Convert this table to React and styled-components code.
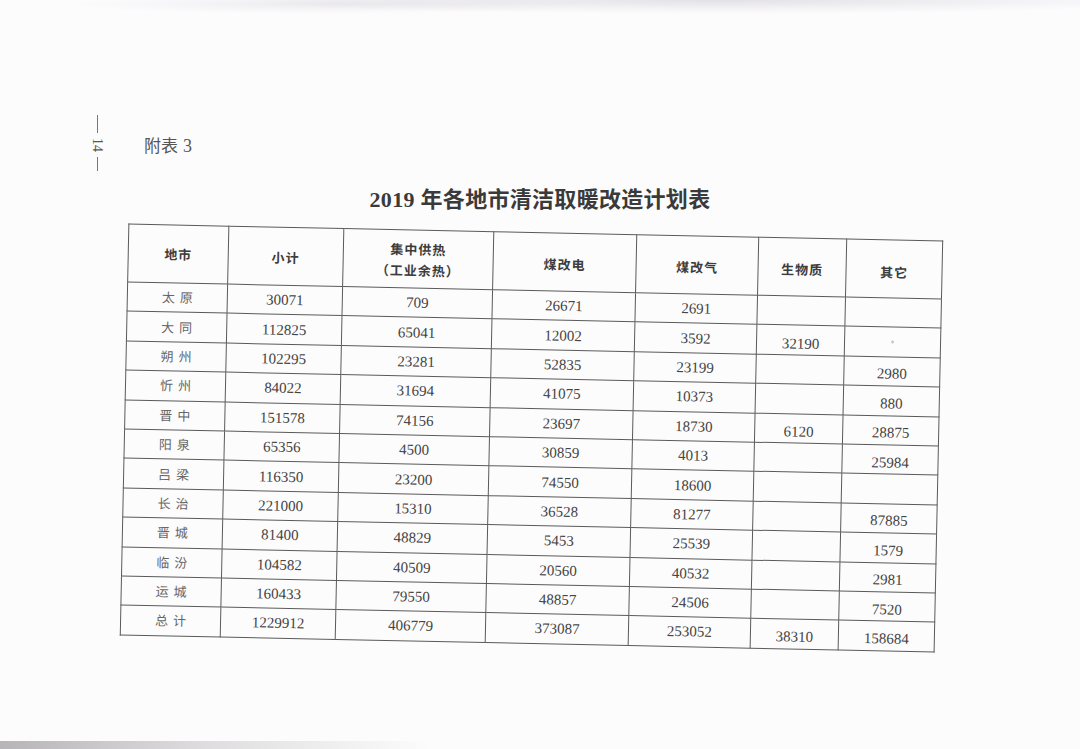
import React from 'react';
import styled, { createGlobalStyle } from 'styled-components';

const GlobalStyle = createGlobalStyle`
  html, body {
    margin: 0;
    padding: 0;
    background: #fdfcfd;
  }
`;

const Sheet = styled.div`
  width: 1080px;
  height: 749px;
  overflow: hidden;
  box-sizing: border-box;
  padding-top: 108px;
  display: flex;
  flex-direction: column;
  background:
    radial-gradient(ellipse 480px 14px at 720px 0px, rgba(205,203,210,0.55), rgba(253,252,253,0)),
    radial-gradient(ellipse 260px 10px at 330px 4px, rgba(215,213,220,0.45), rgba(253,252,253,0)),
    linear-gradient(90deg, rgba(170,168,172,0.85) 0%, rgba(200,198,200,0.55) 50%, rgba(253,252,253,0) 100%) 0 741px / 430px 8px no-repeat,
    #fdfcfd;
  font-family: "Liberation Serif", "Noto Sans CJK SC", serif;
  color: #444;
`;

const TopRow = styled.div`
  height: 70px;
  display: flex;
  align-items: center;
  padding-left: 90px;
  gap: 40px;
`;

const PageNumber = styled.div`
  width: 14px;
  display: flex;
  flex-direction: column;
  align-items: center;
  gap: 5px;
`;

const Dash = styled.span`
  width: 1px;
  height: ${(p) => p.$h}px;
  background: #777;
`;

const PageNum = styled.span`
  writing-mode: vertical-rl;
  font-size: 14px;
  color: #555;
  line-height: 14px;
`;

const Annex = styled.div`
  font-family: "Noto Sans CJK SC", sans-serif;
  font-size: 17px;
  color: #555;
  margin-top: 2px;
  span {
    font-family: "Liberation Serif", serif;
    font-size: 18px;
    margin-left: 5px;
  }
`;

const Title = styled.h1`
  margin: 7px 0 0 0;
  text-align: center;
  font-size: 22px;
  line-height: 30px;
  font-weight: 700;
  color: #3a3a3a;
  font-family: "Liberation Serif", "Noto Sans CJK SC", serif;
  letter-spacing: 0.3px;
`;

const TableWrap = styled.div`
  margin-top: 17px;
  padding-left: 124px;
`;

const Table = styled.table`
  border-collapse: collapse;
  table-layout: fixed;
  width: 814px;
  transform: rotate(1.2deg);
  transform-origin: 407px 205px;
`;

const HeadCell = styled.th`
  box-sizing: border-box;
  height: 58px;
  border: 1px solid #5a5a5a;
  padding: ${(p) => p.$shift || 0}px 0 0 0;
  font-family: "Noto Sans CJK SC", sans-serif;
  font-size: 13px;
  font-weight: 700;
  color: #3c3c3c;
  line-height: 21px;
  letter-spacing: 1px;
  vertical-align: middle;
`;

const Cell = styled.td`
  box-sizing: border-box;
  height: 29.4px;
  border: 1px solid #5a5a5a;
  padding: ${(p) => p.$shift || 0}px 0 0 0;
  text-align: center;
  vertical-align: middle;
  font-size: 15px;
  line-height: 18px;
  color: #444;
`;

const CityCell = styled(Cell)`
  font-family: "Noto Sans CJK SC", sans-serif;
  font-size: 13px;
  color: #666;
  letter-spacing: 5px;
  text-indent: 5px;
`;

const Speck = styled.span`
  display: inline-block;
  width: 3px;
  height: 3px;
  border-radius: 50%;
  background: #c8c8c8;
  vertical-align: 6px;
`;

const columns = [100, 115, 150, 143, 122, 88, 96];

const rows = [
  ['太原', '30071', '709', '26671', '2691', '', ''],
  ['大同', '112825', '65041', '12002', '3592', '32190', 'speck'],
  ['朔州', '102295', '23281', '52835', '23199', '', '2980'],
  ['忻州', '84022', '31694', '41075', '10373', '', '880'],
  ['晋中', '151578', '74156', '23697', '18730', '6120', '28875'],
  ['阳泉', '65356', '4500', '30859', '4013', '', '25984'],
  ['吕梁', '116350', '23200', '74550', '18600', '', ''],
  ['长治', '221000', '15310', '36528', '81277', '', '87885'],
  ['晋城', '81400', '48829', '5453', '25539', '', '1579'],
  ['临汾', '104582', '40509', '20560', '40532', '', '2981'],
  ['运城', '160433', '79550', '48857', '24506', '', '7520'],
  ['总计', '1229912', '406779', '373087', '253052', '38310', '158684'],
];

export default function App() {
  return (
    <>
      <GlobalStyle />
      <Sheet>
        <TopRow>
          <PageNumber>
            <Dash $h={18} />
            <PageNum>14</PageNum>
            <Dash $h={14} />
          </PageNumber>
          <Annex>
            附表<span>3</span>
          </Annex>
        </TopRow>
        <Title>2019 年各地市清洁取暖改造计划表</Title>
        <TableWrap>
          <Table>
            <colgroup>
              {columns.map((w, i) => (
                <col key={i} style={{ width: w }} />
              ))}
            </colgroup>
            <thead>
              <tr>
                <HeadCell>地市</HeadCell>
                <HeadCell $shift={2}>小计</HeadCell>
                <HeadCell>
                  集中供热
                  <br />
                  （工业余热）
                </HeadCell>
                <HeadCell $shift={4}>煤改电</HeadCell>
                <HeadCell $shift={4}>煤改气</HeadCell>
                <HeadCell $shift={4}>生物质</HeadCell>
                <HeadCell $shift={6}>其它</HeadCell>
              </tr>
            </thead>
            <tbody>
              {rows.map((r) => (
                <tr key={r[0]}>
                  <CityCell>{r[0]}</CityCell>
                  <Cell>{r[1]}</Cell>
                  <Cell>{r[2]}</Cell>
                  <Cell>{r[3]}</Cell>
                  <Cell>{r[4]}</Cell>
                  <Cell $shift={6}>{r[5]}</Cell>
                  <Cell $shift={5}>{r[6] === 'speck' ? <Speck /> : r[6]}</Cell>
                </tr>
              ))}
            </tbody>
          </Table>
        </TableWrap>
      </Sheet>
    </>
  );
}
